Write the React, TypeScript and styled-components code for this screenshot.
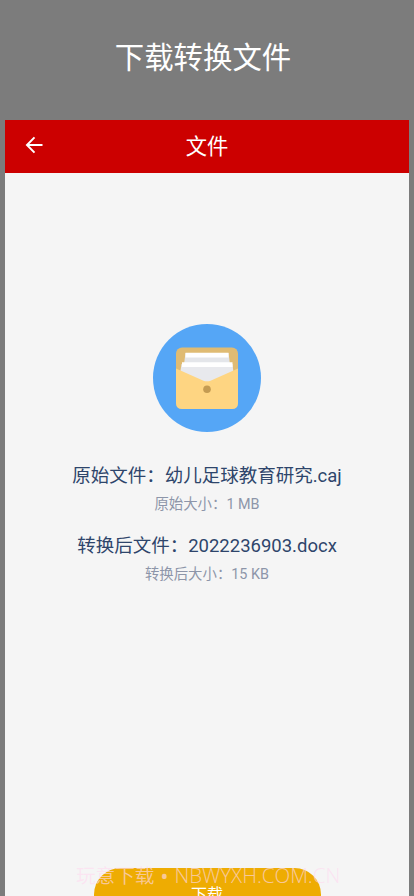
import React from "react";
import styled, { createGlobalStyle } from "styled-components";

const GlobalStyle = createGlobalStyle`
  * { box-sizing: border-box; }
  html, body, #root { height: 100%; }
  body { margin: 0; overflow: hidden; }
`;

const Page = styled.div`
  position: relative;
  display: flex;
  flex-direction: column;
  height: 896px;
  width: 414px;
  overflow: hidden;
  background: #7c7c7c;
  font-family: Roboto, "Noto Sans CJK SC", sans-serif;
`;

const Banner = styled.h1`
  flex: none;
  display: flex;
  align-items: center;
  justify-content: center;
  height: 120px;
  margin: 0;
  padding: 0 8px 4px 0;
  color: #fff;
  font-size: 29.4px;
  font-weight: 400;
  line-height: 44px;
`;

const Screen = styled.main`
  flex: 1;
  min-height: 0;
  display: flex;
  flex-direction: column;
  margin: 0 5px;
  background: #f5f5f5;
`;

const AppBar = styled.header`
  flex: none;
  display: grid;
  grid-template-columns: 58px 1fr 58px;
  align-items: center;
  height: 53px;
  background: #cc0000;
  color: #fff;
`;

const BackButton = styled.button`
  display: flex;
  padding: 0 0 3px 20px;
  border: 0;
  background: none;
  color: inherit;
`;

const BarTitle = styled.h2`
  margin: 0;
  font-size: 21.3px;
  font-weight: 400;
  line-height: 30px;
  text-align: center;
`;

const Content = styled.section`
  flex: 1;
  min-height: 0;
  display: flex;
  flex-direction: column;
  align-items: center;
  padding-top: 151px;
`;

const FolderSvg = styled.svg`
  flex: none;
`;

const FileInfo = styled.div<{ $gap: number }>`
  flex: none;
  margin-top: ${(p) => p.$gap}px;
  text-align: center;
  white-space: nowrap;
`;

const FileName = styled.div`
  color: #2e456b;
  font-size: 18.5px;
  line-height: 30px;
`;

const FileSize = styled.div`
  margin-top: 2px;
  color: #8d95a9;
  font-size: 14.4px;
  line-height: 24px;
`;

const DownloadButton = styled.button`
  flex: none;
  width: 227px;
  height: 53px;
  margin-top: 281px;
  padding: 0;
  border: 0;
  border-radius: 27px;
  background: #eeac02;
  color: #fff;
  font-family: inherit;
  font-size: 16px;
  line-height: 50px;
`;

const Watermark = styled.div`
  position: absolute;
  left: 76px;
  top: 860px;
  display: flex;
  color: rgba(255, 218, 240, 0.65);
  font-family: "Noto Sans CJK SC", sans-serif;
  font-size: 19.6px;
  font-weight: 350;
  line-height: 30px;
  white-space: nowrap;
`;

const WatermarkDot = styled.span`
  width: 20px;
  font-family: "Open Sans", sans-serif;
  font-size: 22px;
  font-weight: 400;
  text-align: center;
`;

const WatermarkSite = styled.span`
  font-family: "Open Sans", "Noto Sans", sans-serif;
  font-size: 20.5px;
  font-weight: 300;
`;

const ArrowIcon = () => (
  <svg width="18" height="18" viewBox="0 0 18 18" fill="none" stroke="#fff" strokeWidth="2">
    <path d="M17.5 9H2.5M9.5 1.4L2 9L9.5 16.6" />
  </svg>
);

const FolderIcon = () => (
  <FolderSvg width="108" height="108" viewBox="0 0 108 108">
    <circle cx="54" cy="54" r="54" fill="#55a6f6" />
    <rect x="23" y="23.5" width="62" height="61" rx="6" fill="#dfbb73" />
    <path d="M32.5 29H75.5L78 48H30Z" fill="#e4e6ea" />
    <path d="M32.5 28.7H75.5V33.5H32.5Z" fill="#fff" />
    <path d="M28.5 40H79.5L81 53L54 60L26.5 53Z" fill="#e8e9ed" />
    <path d="M29 38.3H79.5V43H29Z" fill="#fff" />
    <path d="M23 44.5L50.5 56.7Q54 58 57.5 56.7L85 44.5V79Q85 85 79 85H29Q23 85 23 79Z" fill="#fed582" />
    <circle cx="54" cy="65.2" r="3.8" fill="#c49b52" />
  </FolderSvg>
);

export default function App() {
  return (
    <>
      <GlobalStyle />
      <Page>
        <Banner>下载转换文件</Banner>
        <Screen>
          <AppBar>
            <BackButton aria-label="返回">
              <ArrowIcon />
            </BackButton>
            <BarTitle>文件</BarTitle>
          </AppBar>
          <Content>
            <FolderIcon />
            <FileInfo $gap={29}>
              <FileName>原始文件：幼儿足球教育研究.caj</FileName>
              <FileSize>原始大小：1 MB</FileSize>
            </FileInfo>
            <FileInfo $gap={14}>
              <FileName>转换后文件：2022236903.docx</FileName>
              <FileSize>转换后大小：15 KB</FileSize>
            </FileInfo>
            <DownloadButton>下载</DownloadButton>
          </Content>
        </Screen>
        <Watermark>
          <span>玩意下载</span>
          <WatermarkDot>•</WatermarkDot>
          <WatermarkSite>NBWYXH.COM.CN</WatermarkSite>
        </Watermark>
      </Page>
    </>
  );
}
